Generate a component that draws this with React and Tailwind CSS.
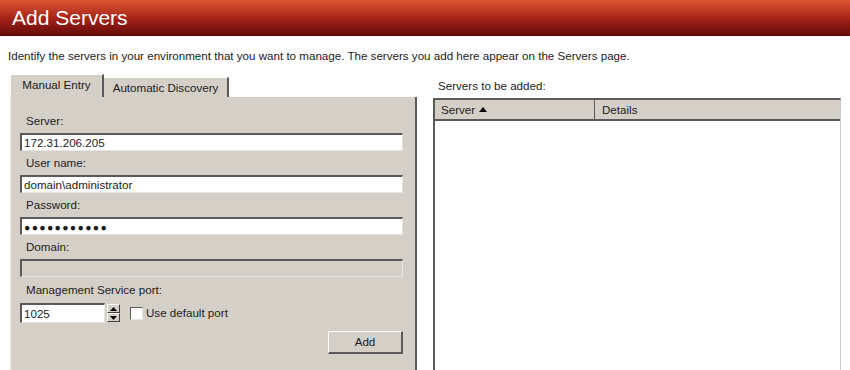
import React from "react";

function Field({ label, value, disabled, first }) {
  return (
    <div className={first ? "flex flex-col" : "flex flex-col mt-[5px]"}>
      <div className="h-[14px] leading-[14px] pl-[6px] mb-[5px]">{label}</div>
      <div
        className={
          "h-[18px] w-[383px] border-t-2 border-l-2 border-t-[#5a5a5a] border-l-[#5a5a5a] border-b border-r border-b-[#e8e6e2] border-r-[#e8e6e2] flex items-center pl-[2px] leading-[14px] " +
          (disabled ? "bg-[#d4d0c8]" : "bg-white")
        }
      >
        {value}
      </div>
    </div>
  );
}

function SpinBtn({ up }) {
  return (
    <div className="w-[13px] h-[9px] bg-[#d4d0c8] border-t border-l border-t-white border-l-white border-b border-r border-b-[#404040] border-r-[#404040] flex items-center justify-center">
      <svg width="7" height="4" viewBox="0 0 7 4">
        {up ? <polygon points="0,4 7,4 3.5,0" fill="#000" /> : <polygon points="0,0 7,0 3.5,4" fill="#000" />}
      </svg>
    </div>
  );
}

export default function App() {
  return (
    <div className="w-[850px] h-[370px] overflow-hidden bg-white font-['Liberation_Sans',Arial,sans-serif] text-[11.6px] text-[#1c1c1c]">
      <div className="h-[36px] bg-gradient-to-b from-[#dd5533] via-[#a82418] to-[#630909] pl-[12px] flex items-center">
        <span className="text-white text-[21px] leading-[26px]">Add Servers</span>
      </div>
      <div className="pl-[8px] pt-[13px] h-[38px] leading-[14px]">
        Identify the servers in your environment that you want to manage. The servers you add here appear on the Servers page.
      </div>
      <div className="flex pl-[10px] gap-[16px]">
        <div className="w-[407px] flex flex-col">
          <div className="h-[23px] flex items-end">
            <div className="h-[23px] w-[94px] bg-[#d4d0c8] border-t border-l border-t-white border-l-white border-r-2 border-r-[#5a5a5a] flex items-center justify-center pb-[2px]">
              Manual Entry
            </div>
            <div className="h-[20px] w-[125px] bg-[#d4d0c8] border-t border-t-white border-r-2 border-r-[#5a5a5a] flex items-center justify-center">
              Automatic Discovery
            </div>
          </div>
          <div className="h-[280px] bg-[#d4d0c8] border-l border-l-[#eeeeee] border-r-2 border-r-[#5a5a5a] pl-[9px] pt-[17px] flex flex-col">
            <Field first label="Server:" value="172.31.206.205" />
            <Field label="User name:" value="domain\administrator" />
            <Field label="Password:" value={<span className="tracking-[1.3px] text-[10.5px]">●●●●●●●●●●●</span>} />
            <Field label="Domain:" value="" disabled />
            <div className="h-[14px] leading-[14px] pl-[6px] mt-[6px] mb-[6px]">Management Service port:</div>
            <div className="flex items-center h-[20px]">
              <div className="h-[20px] w-[85px] bg-white border-t-2 border-l-2 border-t-[#5a5a5a] border-l-[#5a5a5a] border-b border-r border-b-[#e8e6e2] border-r-[#e8e6e2] flex items-center pl-[2px]">
                1025
              </div>
              <div className="ml-[2px] flex flex-col">
                <SpinBtn up />
                <SpinBtn />
              </div>
              <div className="ml-[10px] w-[13px] h-[13px] bg-white border-t border-l border-t-[#5a5a5a] border-l-[#5a5a5a] border-b border-r border-b-[#e8e6e2] border-r-[#e8e6e2]" />
              <span className="ml-[3px]">Use default port</span>
            </div>
            <div className="flex justify-end pr-[12px] mt-[8px]">
              <div className="w-[75px] h-[23px] bg-[#d4d0c8] border-t border-l border-t-white border-l-white border-b-2 border-r-2 border-b-[#5a5a5a] border-r-[#5a5a5a] flex items-center justify-center">
                Add
              </div>
            </div>
          </div>
        </div>
        <div className="w-[408px] flex flex-col">
          <div className="h-[24px] pt-[5px] pl-[5px] leading-[14px]">Servers to be added:</div>
          <div className="h-[280px] bg-white border-t-2 border-l-2 border-t-[#5a5a5a] border-l-[#5a5a5a] border-r border-r-[#c8c8c8] flex flex-col">
            <div className="h-[21px] flex bg-[#d4d0c8] border-b-2 border-b-[#5a5a5a]">
              <div className="w-[160px] border-r border-r-[#5a5a5a] flex items-center pl-[6px] gap-[4px]">
                <span>Server</span>
                <svg width="8" height="5" viewBox="0 0 8 5"><polygon points="0,5 8,5 4,0" fill="#000" /></svg>
              </div>
              <div className="flex-1 flex items-center pl-[7px]">Details</div>
            </div>
          </div>
        </div>
      </div>
    </div>
  );
}
